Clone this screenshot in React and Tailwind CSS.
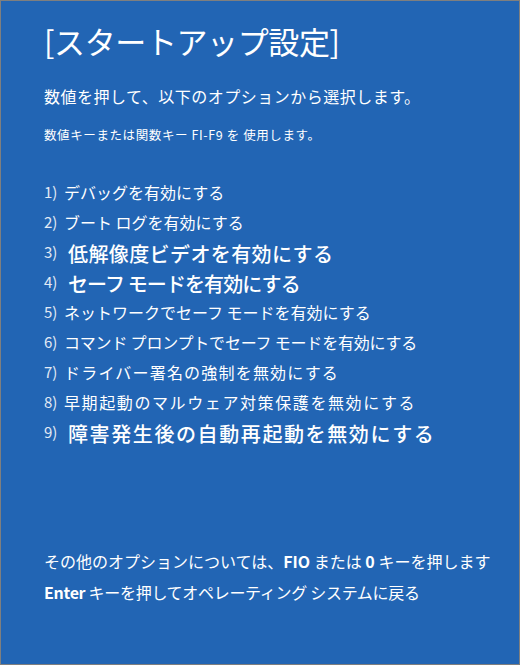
export default function App() {
  const items = [
    { n: "1)", t: "デバッグを有効にする", b: false, c: "" },
    { n: "2)", t: "ブート ログを有効にする", b: false, c: "" },
    { n: "3)", t: "低解像度ビデオを有効にする", b: true, c: "tracking-[0.4px]" },
    { n: "4)", t: "セーフ モードを有効にする", b: true, c: "tracking-[-0.9px]" },
    { n: "5)", t: "ネットワークでセーフ モードを有効にする", b: false, c: "" },
    { n: "6)", t: "コマンド プロンプトでセーフ モードを有効にする", b: false, c: "tracking-[-0.2px]" },
    { n: "7)", t: "ドライバー署名の強制を無効にする", b: false, c: "tracking-[1.2px]" },
    { n: "8)", t: "早期起動のマルウェア対策保護を無効にする", b: false, c: "tracking-[1.6px]" },
    { n: "9)", t: "障害発生後の自動再起動を無効にする", b: true, c: "tracking-[1.6px]" },
  ];
  return (
    <div
      className="w-[520px] h-[665px] bg-[#2265b4] border border-[#7f7f7f] text-white flex flex-col pl-[43px] overflow-hidden"
      style={{ fontFamily: '"Noto Sans CJK JP", "Noto Sans", sans-serif' }}
    >
      <div className="mt-[20px] text-[31px] leading-[40px] tracking-[-0.4px]">[スタートアップ設定]</div>
      <div className="mt-[23px] text-[16px] leading-[24px] tracking-[0.5px]">数値を押して、以下のオプションから選択します。</div>
      <div className="mt-[18px] text-[12.5px] leading-[18px] tracking-[0.6px]">数値キーまたは関数キー FI-F9 を 使用します。</div>
      <div className="mt-[33px] flex flex-col">
        {items.map((it) => (
          <div key={it.n} className="h-[30px] flex items-center">
            <span className="text-[15px] w-[20px] text-[#e3eaf5]">{it.n}</span>
            {it.b ? (
              <span className={"ml-[4px] text-[20px] font-medium mt-[3px] " + it.c}>{it.t}</span>
            ) : (
              <span className={"text-[16px] " + it.c}>{it.t}</span>
            )}
          </div>
        ))}
      </div>
      <div className="mt-[99px] text-[16px] leading-[31px]">
        その他のオプションについては、<span className="font-bold">FIO</span> または <span className="font-bold">0</span> キーを押します
      </div>
      <div className="text-[16px] leading-[31px] tracking-[-0.3px]">
        <span className="font-bold">Enter</span> キーを押してオペレーティング システムに戻る
      </div>
    </div>
  );
}
